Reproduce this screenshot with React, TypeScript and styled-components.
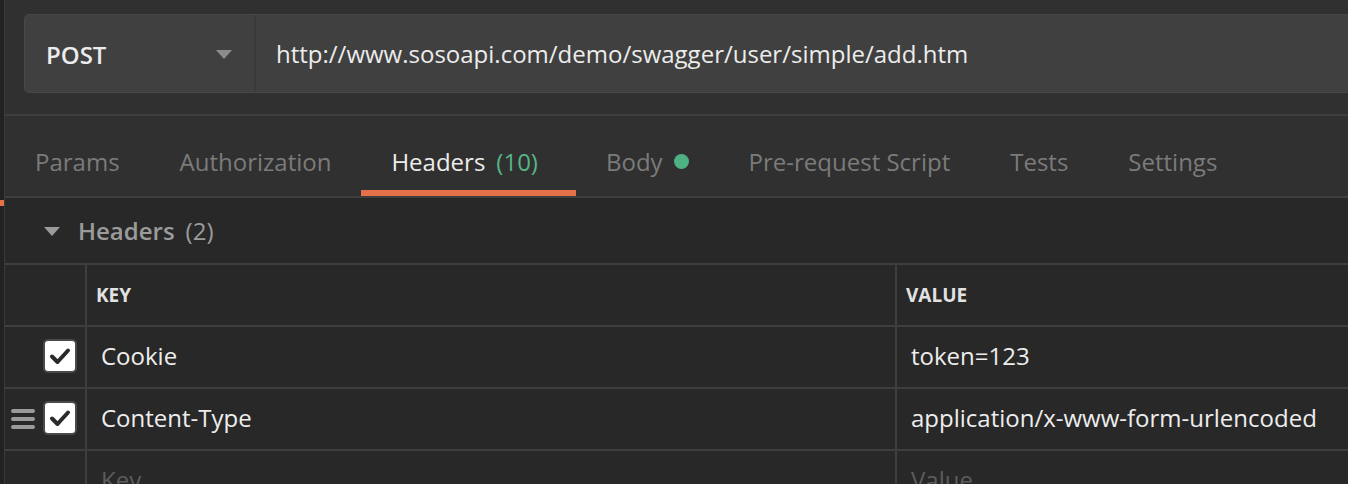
import React from "react";
import styled, { createGlobalStyle } from "styled-components";

const GlobalStyle = createGlobalStyle`
  html, body {
    margin: 0;
    padding: 0;
    background: #282828;
    font-family: "Open Sans", "Liberation Sans", sans-serif;
  }
  * { box-sizing: border-box; }
`;

const Page = styled.div`
  display: flex;
  width: 1348px;
  height: 484px;
  overflow: hidden;
  background: #282828;
`;

const SideStrip = styled.div`
  width: 5px;
  flex-shrink: 0;
  background: #222222;
  border-right: 1px solid #3a3a3a;
  padding-top: 200px;
`;

const SideMark = styled.div`
  width: 4px;
  height: 6px;
  background: #e4714a;
`;

const Main = styled.div`
  flex: 1;
  display: flex;
  flex-direction: column;
  min-width: 0;
  & > * {
    flex-shrink: 0;
  }
`;

const TopBar = styled.div`
  background: #303030;
  padding: 14px 0 21px 19px;
  border-bottom: 2px solid #3e3e3e;
`;

const UrlBar = styled.div`
  display: flex;
  height: 79px;
  margin-right: -20px;
  background: #404040;
  border: 1px solid #474747;
  border-radius: 5px;
`;

const MethodSelect = styled.div`
  width: 231px;
  display: flex;
  align-items: center;
  justify-content: space-between;
  padding: 2px 22px 0 21px;
  border-right: 2px solid #3a3a3a;
  color: #ececec;
  font-size: 24px;
  font-weight: 600;
`;

const Caret = styled.span`
  width: 0;
  height: 0;
  border-left: 8px solid transparent;
  border-right: 8px solid transparent;
  border-top: 9px solid #8c8c8c;
`;

const UrlText = styled.div`
  display: flex;
  align-items: center;
  padding-left: 20px;
  color: #ececec;
  font-size: 24px;
`;

const TabRow = styled.div`
  display: flex;
  height: 82px;
  background: #303030;
  border-bottom: 2px solid #3e3e3e;
`;

const Tab = styled.div<{ $active?: boolean }>`
  display: flex;
  align-items: center;
  gap: 11px;
  padding: 16px 30px 0 30px;
  font-size: 24px;
  color: ${(p) => (p.$active ? "#ececec" : "#7b7b7b")};
  border-bottom: 6px solid ${(p) => (p.$active ? "#e4714a" : "transparent")};
`;

const Count = styled.span`
  color: #55b486;
  margin-right: 8px;
`;

const Dot = styled.span`
  width: 15px;
  height: 15px;
  border-radius: 50%;
  background: #4db184;
`;

const SectionTitle = styled.div`
  display: flex;
  align-items: center;
  height: 65px;
  padding-left: 39px;
  gap: 18px;
  color: #9b9b9b;
  font-size: 24px;
`;

const SectionCaret = styled.span`
  width: 0;
  height: 0;
  border-left: 8px solid transparent;
  border-right: 8px solid transparent;
  border-top: 9px solid #9b9b9b;
  margin-top: 2px;
`;

const Strong = styled.span`
  font-weight: 600;
  margin-right: 11px;
`;

const Table = styled.div`
  display: grid;
  grid-template-columns: 82px 810px 1fr;
  border-top: 2px solid #3e3e3e;
`;

const Cell = styled.div<{ $last?: boolean }>`
  height: 62px;
  display: flex;
  align-items: center;
  border-bottom: 2px solid #3e3e3e;
  border-right: ${(p) => (p.$last ? "none" : "2px solid #3e3e3e")};
`;

const CheckCell = styled(Cell)`
  justify-content: flex-end;
  gap: 8px;
  padding-right: 8px;
`;

const HeadCell = styled(Cell)`
  padding-left: 9px;
  font-size: 19px;
  font-weight: 700;
  color: #e2e2e2;
`;

const TextCell = styled(Cell)<{ $placeholder?: boolean }>`
  padding-left: 14px;
  padding-bottom: 4px;
  font-size: 24px;
  color: ${(p) => (p.$placeholder ? "#5c5c5c" : "#ededed")};
`;

const Checkbox = styled.div`
  width: 34px;
  height: 34px;
  border-radius: 5px;
  background: #ffffff;
  border: 2px solid #4a4a4a;
  display: flex;
  align-items: center;
  justify-content: center;
  margin-bottom: 2px;
`;

const Handle = styled.div`
  display: flex;
  flex-direction: column;
  gap: 4px;
  width: 24px;
`;

const HandleLine = styled.span`
  height: 4px;
  border-radius: 2px;
  background: #9a9a9a;
`;

const CheckMark = () => (
  <svg width="22" height="18" viewBox="0 0 22 18">
    <path
      d="M3 9.5 L8.5 15 L19 3.5"
      fill="none"
      stroke="#2b2b2b"
      strokeWidth="4"
      strokeLinecap="round"
      strokeLinejoin="round"
    />
  </svg>
);

const tabs = [
  { label: "Params" },
  { label: "Authorization" },
  { label: "Headers", count: "(10)", active: true },
  { label: "Body", dot: true },
  { label: "Pre-request Script" },
  { label: "Tests" },
  { label: "Settings" },
];

const rows = [
  { key: "Cookie", value: "token=123", handle: false },
  { key: "Content-Type", value: "application/x-www-form-urlencoded", handle: true },
];

export default function App() {
  return (
    <>
      <GlobalStyle />
      <Page>
        <SideStrip>
          <SideMark />
        </SideStrip>
        <Main>
          <TopBar>
            <UrlBar>
              <MethodSelect>
                POST
                <Caret />
              </MethodSelect>
              <UrlText>http://www.sosoapi.com/demo/swagger/user/simple/add.htm</UrlText>
            </UrlBar>
          </TopBar>
          <TabRow>
            {tabs.map((t) => (
              <Tab key={t.label} $active={t.active}>
                {t.label}
                {t.count && <Count>{t.count}</Count>}
                {t.dot && <Dot />}
              </Tab>
            ))}
          </TabRow>
          <SectionTitle>
            <SectionCaret />
            <span>
              <Strong>Headers</Strong>(2)
            </span>
          </SectionTitle>
          <Table>
            <Cell />
            <HeadCell>KEY</HeadCell>
            <HeadCell $last>VALUE</HeadCell>
            {rows.map((r) => (
              <React.Fragment key={r.key}>
                <CheckCell>
                  {r.handle && (
                    <Handle>
                      <HandleLine />
                      <HandleLine />
                      <HandleLine />
                    </Handle>
                  )}
                  <Checkbox>
                    <CheckMark />
                  </Checkbox>
                </CheckCell>
                <TextCell>{r.key}</TextCell>
                <TextCell $last>{r.value}</TextCell>
              </React.Fragment>
            ))}
            <Cell />
            <TextCell $placeholder>Key</TextCell>
            <TextCell $placeholder $last>Value</TextCell>
          </Table>
        </Main>
      </Page>
    </>
  );
}
